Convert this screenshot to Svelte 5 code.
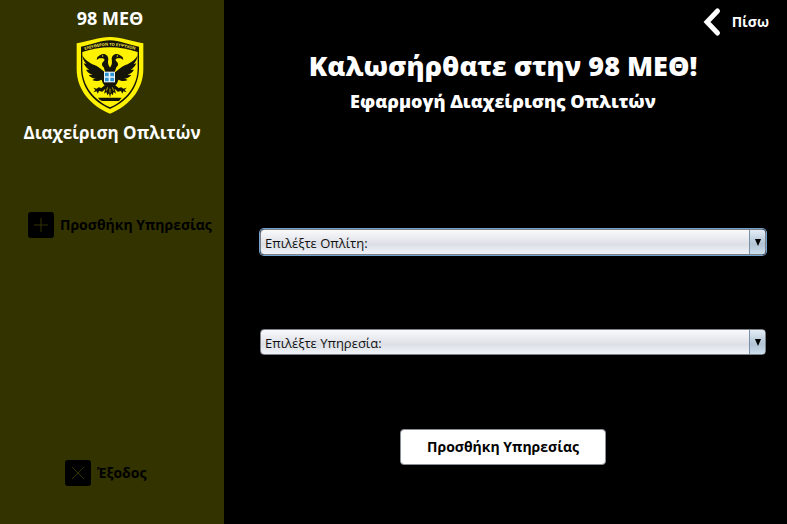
<script>
  const soldiers = ['Επιλέξτε Οπλίτη:'];
  const services = ['Επιλέξτε Υπηρεσία:'];
  let soldier = $state(soldiers[0]);
  let service = $state(services[0]);
</script>

<div class="app">
  <aside>
    <div class="brand">
      <p class="unit">98 ΜΕΘ</p>
      <svg class="crest" viewBox="18 10 204 234" role="img" aria-label="Έμβλημα">
        <path fill="#fff200" d="M20 32C54 26 88 14 120 13C152 14 186 26 220 32V110C220 174 174 222 120 243C66 222 20 174 20 110Z" />
        <path fill="#151409" d="M33 42C66 36 92 24 120 23C148 24 174 36 207 42V106C207 166 168 208 120 229C72 208 33 166 33 106Z" />
        <path fill="#fff200" d="M37 58C66 50 92 44 120 44C148 44 174 50 203 58V106C203 162 166 203 120 224C74 203 37 162 37 106Z" />
        <path id="motto-line" fill="none" d="M36 54C68 45 94 39 120 39C146 39 172 45 204 54" />
        <text class="motto"><textPath href="#motto-line" startOffset="50%" text-anchor="middle">ΕΛΕΥΘΕΡΟΝ ΤΟ ΕΥΨΥΧΟΝ</textPath></text>
        <g id="eagle" fill="#151409">
          <path d="M121 118H104C96 112 90 106 80 100C62 94 46 84 37 68C38 80 43 88 49 94L41 92C45 102 52 108 58 111L48 111C53 120 61 124 67 126L56 127C62 135 70 138 77 137L67 142C75 147 86 146 95 141C97 148 99 154 104 158L94 166L86 164L80 168L70 165L76 172L70 179L80 176L83 183L87 175L97 177L106 168L102 183L109 178L112 188L117 182L121 194Z" />
          <path d="M121 106L117 100C113 94 114 86 115 80C115 70 108 63 99 64C91 65 87 70 82 73L80 82L88 77L98 77C104 78 105 82 101 86C94 92 94 99 101 104L106 119H121Z" />
        </g>
        <use href="#eagle" transform="translate(240 0) scale(-1 1)" />
        <path stroke="#fff200" stroke-width="2" fill="none" d="M113 164L109 174M127 164L131 174M120 168V180" />
        <circle cx="98" cy="70" r="2" fill="#fff200" />
        <circle cx="142" cy="70" r="2" fill="#fff200" />
        <path fill="#151409" d="M84 195H155L147 205H99C92 204 87 200 84 195Z" />
        <path fill="#e6f5fb" d="M102 117H135V149H102Z" />
        <path fill="#2f94d6" d="M105 120H116V131H105ZM121 120H132V131H121ZM105 135H116V146H105ZM121 135H132V146H121Z" />
      </svg>
    </div>
    <h2>Διαχείριση Οπλιτών</h2>
    <nav>
      <button class="side add">
        <svg viewBox="0 0 26 26" aria-hidden="true"><rect width="26" height="26" rx="3" /><path d="M13 6V20M6 13H20" /></svg>
        Προσθήκη Υπηρεσίας
      </button>
      <button class="side exit">
        <svg viewBox="0 0 26 26" aria-hidden="true"><rect width="26" height="26" rx="3" /><path d="M7 7L19 19M19 7L7 19" /></svg>
        Έξοδος
      </button>
    </nav>
  </aside>

  <main>
    <button class="back">
      <svg viewBox="0 0 20 30" aria-hidden="true"><path d="M15.500 4L5 15L15.500 26" /></svg>
      Πίσω
    </button>
    <h1>Καλωσήρθατε στην 98 ΜΕΘ!</h1>
    <p class="subtitle">Εφαρμογή Διαχείρισης Οπλιτών</p>
    <form onsubmit={(e) => e.preventDefault()}>
      <div class="combo focused">
        <select aria-label="Οπλίτης" bind:value={soldier}>
          {#each soldiers as name}<option>{name}</option>{/each}
        </select>
        <span class="arrow" aria-hidden="true"><svg viewBox="0 0 8 8"><path d="M0.500 0H7.500L4 8Z" /></svg></span>
      </div>
      <div class="combo">
        <select aria-label="Υπηρεσία" bind:value={service}>
          {#each services as name}<option>{name}</option>{/each}
        </select>
        <span class="arrow" aria-hidden="true"><svg viewBox="0 0 8 8"><path d="M0.500 0H7.500L4 8Z" /></svg></span>
      </div>
      <button class="submit">Προσθήκη Υπηρεσίας</button>
    </form>
  </main>
</div>

<style>
  :global(body) {
    background: #000;
  }
  .app {
    display: flex;
    min-height: 100vh;
    font-family: "Open Sans", "Noto Sans", sans-serif;
    font-size: 14px;
    color: #fff;
  }
  h1, h2, p {
    margin: 0;
  }
  button {
    display: flex;
    align-items: center;
    padding: 0;
    border: 0;
    background: none;
    font: inherit;
    font-weight: 700;
    line-height: 20px;
    white-space: nowrap;
  }
  aside {
    box-sizing: border-box;
    flex: 0 0 224px;
    display: flex;
    flex-direction: column;
    align-items: center;
    padding: 6px 0 38px;
    background: #333300;
  }
  .brand {
    display: flex;
    flex-direction: column;
    align-items: center;
    padding-right: 4px;
  }
  .unit, h2 {
    font-size: 17px;
    font-weight: 700;
    line-height: 24px;
  }
  .unit {
    font-size: 18px;
  }
  .crest {
    width: 68px;
    height: 78px;
    margin: 6px 0 7px;
  }
  .motto {
    fill: #f0e040;
    font-size: 12px;
    font-weight: 700;
  }
  nav {
    flex: 1;
    align-self: stretch;
    display: flex;
    flex-direction: column;
    justify-content: space-between;
    margin-top: 67px;
  }
  .side {
    gap: 6px;
    color: #000;
  }
  .side svg {
    width: 26px;
    height: 26px;
  }
  .side path {
    fill: none;
    stroke: #333300;
    stroke-width: 1;
  }
  .add {
    margin-left: 28px;
  }
  .exit {
    margin-left: 65px;
  }
  main {
    flex: 1;
    display: flex;
    flex-direction: column;
    padding: 7px 18px 0 36px;
  }
  .back {
    align-self: flex-end;
    gap: 10px;
    color: #fff;
  }
  .back svg {
    width: 20px;
    height: 30px;
  }
  .back path {
    fill: none;
    stroke: #fff;
    stroke-width: 5;
    stroke-linecap: round;
  }
  h1, .subtitle {
    padding-right: 23px;
    text-align: center;
    font-weight: 800;
  }
  h1 {
    margin-top: 11px;
    font-size: 27px;
    line-height: 36px;
  }
  .subtitle {
    margin-top: 5px;
    font-size: 18px;
    line-height: 24px;
  }
  form {
    display: flex;
    flex-direction: column;
    margin: 116px 3px 0 0;
  }
  .combo {
    position: relative;
    height: 26px;
    margin-bottom: 74px;
    border-radius: 4px;
  }
  .focused {
    box-shadow: 0 0 0 1px #73a4d1;
  }
  select {
    appearance: none;
    box-sizing: border-box;
    width: 100%;
    height: 26px;
    padding: 1px 24px 0 4px;
    border: 1px solid #7c8188;
    border-radius: 4px;
    outline: 0;
    background: linear-gradient(#fafafc, #e2e4ea 50%, #dcdfe5 60%, #f0f3f8);
    color: #111;
    font-family: inherit;
    font-size: 13px;
  }
  .arrow {
    position: absolute;
    inset: 1px 1px 1px auto;
    box-sizing: border-box;
    width: 16px;
    display: grid;
    place-items: center;
    border-left: 1px solid #7890a8;
    border-radius: 0 3px 3px 0;
    background: linear-gradient(#e4edf6, #b8c9d9 50%, #b2c4d5 60%, #ccdfee);
    pointer-events: none;
  }
  .arrow svg {
    width: 8px;
    height: 7px;
  }
  .submit {
    align-self: center;
    justify-content: center;
    width: 206px;
    height: 36px;
    margin-right: 20px;
    border: 1px solid #8a8f96;
    border-radius: 4px;
    background: #fff;
    color: #000;
  }
</style>
